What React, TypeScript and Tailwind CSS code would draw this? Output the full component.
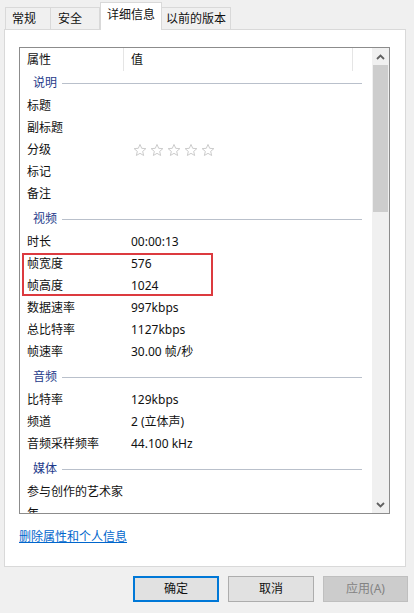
import type { ReactNode } from 'react';

type Row = { label: string; value?: ReactNode };
type Group = { title: string; h: string; rows: Row[] };

function Stars() {
  return (
    <div className="flex gap-[3px] pl-[2px]">
      {[0, 1, 2, 3, 4].map((i) => (
        <svg key={i} width="14" height="14" viewBox="0 0 24 24">
          <path
            d="M12 2.5l2.9 6.6 7.1.6-5.4 4.7 1.6 7-6.2-3.7-6.2 3.7 1.6-7L2 9.7l7.1-.6z"
            fill="none"
            stroke="#c4c4c4"
            strokeWidth="1.5"
            strokeLinejoin="round"
          />
        </svg>
      ))}
    </div>
  );
}

const groups: Group[] = [
  {
    title: '说明',
    h: 'h-[24px]',
    rows: [
      { label: '标题' },
      { label: '副标题' },
      { label: '分级', value: <Stars /> },
      { label: '标记' },
      { label: '备注' },
    ],
  },
  {
    title: '视频',
    h: 'h-[26px] pt-[2px]',
    rows: [
      { label: '时长', value: '00:00:13' },
      { label: '帧宽度', value: '576' },
      { label: '帧高度', value: '1024' },
      { label: '数据速率', value: '997kbps' },
      { label: '总比特率', value: '1127kbps' },
      { label: '帧速率', value: '30.00 帧/秒' },
    ],
  },
  {
    title: '音频',
    h: 'h-[26px] pt-[2px]',
    rows: [
      { label: '比特率', value: '129kbps' },
      { label: '频道', value: '2 (立体声)' },
      { label: '音频采样频率', value: '44.100 kHz' },
    ],
  },
  {
    title: '媒体',
    h: 'h-[26px] pt-[2px]',
    rows: [{ label: '参与创作的艺术家' }, { label: '年' }],
  },
];

function PropRow({ row }: { row: Row }) {
  return (
    <div className="flex h-[22px] items-center text-[12px] text-[#111]">
      <div className="w-[104px] shrink-0 pl-[7px]">{row.label}</div>
      <div className="pl-[7px]">{row.value}</div>
    </div>
  );
}

function Chevron({ up }: { up?: boolean }) {
  return (
    <svg width="9" height="6" viewBox="0 0 9 6" className={up ? '' : 'rotate-180'}>
      <path d="M1 5l3.5-3.5L8 5" fill="none" stroke="#606060" strokeWidth="1.8" />
    </svg>
  );
}

export default function App() {
  const tab = 'h-[22px] border border-b-0 border-[#d9d9d9] bg-[#f0f0f0] text-[12px] text-[#111] flex items-center';
  return (
    <div
      className="w-[414px] h-[613px] overflow-hidden bg-[#f0f0f0]"
      style={{ fontFamily: '"Noto Sans", "Noto Sans CJK SC", sans-serif' }}
    >
      {/* tabs */}
      <div className="flex h-[29px] items-end pl-[5px] relative z-10">
        <div className={`${tab} w-[46px] pl-[6px]`}>常规</div>
        <div className={`${tab} w-[49px] pl-[7px] border-l-0`}>安全</div>
        <div className="h-[28px] w-[62px] pl-[6px] pb-[4px] border border-b-0 border-[#d9d9d9] bg-white text-[12px] text-[#111] flex items-center -mb-[1px]">
          详细信息
        </div>
        <div className={`${tab} w-[69px] pl-[4px] border-l-0`}>以前的版本</div>
      </div>

      {/* panel */}
      <div className="ml-[4px] w-[402px] h-[538px] border border-[#d9d9d9] bg-white pl-[14px] pt-[17px]">
        <div className="flex w-[371px] h-[467px] border border-[#8c8c8c]">
          <div className="flex-1 overflow-hidden">
            <div className="flex h-[23px] items-center text-[12px] text-[#111]">
              <div className="w-[104px] pl-[7px] border-r border-[#e5e5e5] h-full flex items-center">属性</div>
              <div className="w-[229px] pl-[7px] border-r border-[#e5e5e5] h-full flex items-center">值</div>
            </div>
            {groups.map((g) => (
              <div key={g.title}>
                <div className={`flex ${g.h} items-center pl-[13px] pr-[10px]`}>
                  <span className="text-[12px] text-[#1e3a8a]">{g.title}</span>
                  <div className="ml-[5px] h-px flex-1 bg-[#b9c0cb]" />
                </div>
                {g.title === '视频' ? (
                  <>
                    <PropRow row={g.rows[0]} />
                    <div className="relative">
                      <PropRow row={g.rows[1]} />
                      <PropRow row={g.rows[2]} />
                      <div className="absolute left-[2px] top-0 w-[191px] h-[43px] border-2 border-[#dc3a3f]" />
                    </div>
                    {g.rows.slice(3).map((r) => (
                      <PropRow key={r.label} row={r} />
                    ))}
                  </>
                ) : (
                  g.rows.map((r) => <PropRow key={r.label} row={r} />)
                )}
              </div>
            ))}
          </div>
          {/* scrollbar */}
          <div className="w-[17px] bg-[#f0f0f0] flex flex-col items-center">
            <div className="h-[17px] w-full flex items-center justify-center">
              <Chevron up />
            </div>
            <div className="w-[15px] h-[147px] bg-[#cdcdcd]" />
            <div className="flex-1" />
            <div className="h-[17px] w-full flex items-center justify-center">
              <Chevron />
            </div>
          </div>
        </div>
        <div className="mt-[14px] text-[12px] text-[#0066cc] underline">删除属性和个人信息</div>
      </div>

      {/* buttons */}
      <div className="mt-[9px] flex gap-[9px] pl-[133px] text-[12px]">
        <button className="w-[86px] h-[26px] border-2 border-[#0078d7] bg-[#e1e1e1] text-[#111]">确定</button>
        <button className="w-[86px] h-[26px] border border-[#adadad] bg-[#e1e1e1] text-[#111]">取消</button>
        <button className="w-[85px] h-[26px] border border-[#bfbfbf] bg-[#cccccc] text-[#838383]">应用(A)</button>
      </div>
    </div>
  );
}
